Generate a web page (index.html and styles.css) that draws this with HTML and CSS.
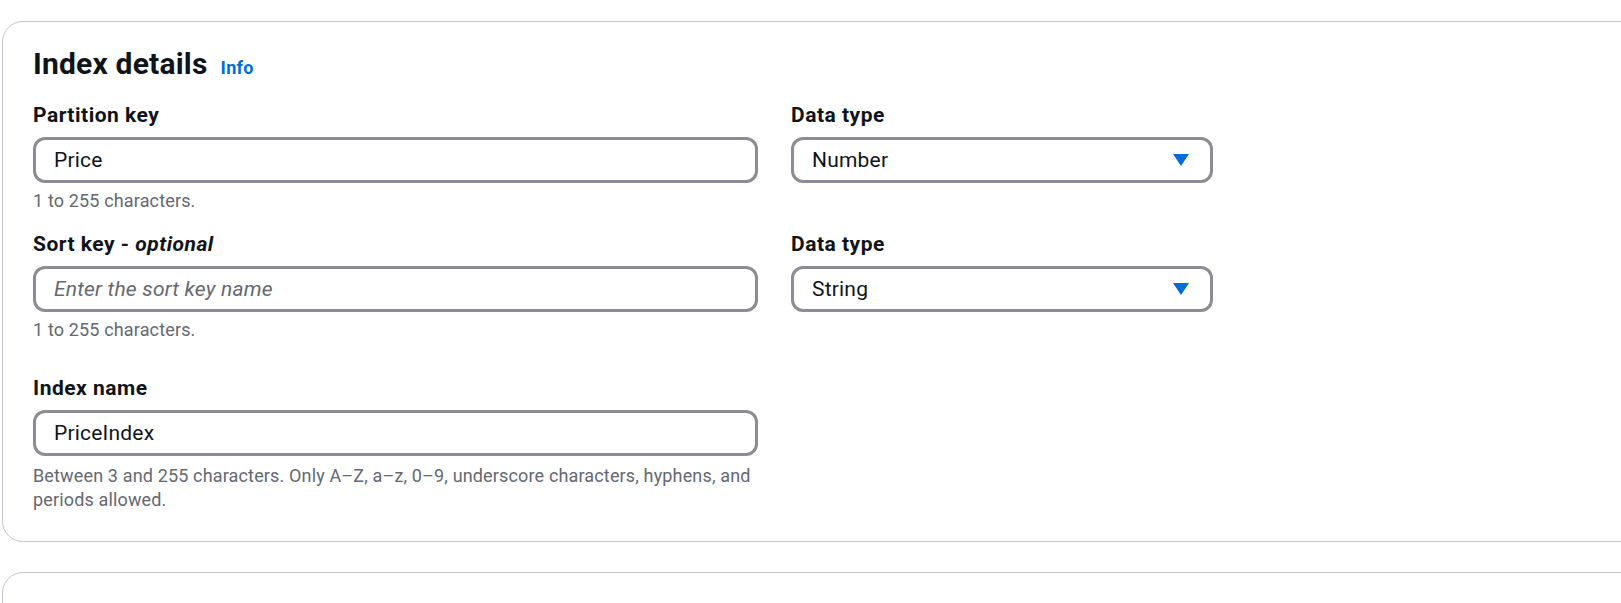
FILE: index.html
```html
<!DOCTYPE html>
<html lang="en">
<head>
<meta charset="utf-8">
<title>Index details</title>
<link rel="stylesheet" href="styles.css">
</head>
<body>
<div class="page">
  <section class="card">
    <header class="card-header">
      <h2 class="card-title">Index details</h2>
      <a class="info-link" href="#">Info</a>
    </header>

    <div class="form-row">
      <div class="field">
        <label class="field-label" for="pk">Partition key</label>
        <input class="text-input" id="pk" type="text" value="Price">
        <div class="constraint">1 to 255 characters.</div>
      </div>
      <div class="field">
        <div class="field-label">Data type</div>
        <div class="select">
          <span class="select-value">Number</span>
          <svg class="caret" width="16" height="12" viewBox="0 0 16 12" aria-hidden="true"><polygon points="0,0 16,0 8,12" fill="#006ce0"/></svg>
        </div>
      </div>
    </div>

    <div class="form-row row-second">
      <div class="field">
        <label class="field-label" for="sk">Sort key - <i>optional</i></label>
        <input class="text-input" id="sk" type="text" placeholder="Enter the sort key name">
        <div class="constraint">1 to 255 characters.</div>
      </div>
      <div class="field">
        <div class="field-label">Data type</div>
        <div class="select">
          <span class="select-value">String</span>
          <svg class="caret" width="16" height="12" viewBox="0 0 16 12" aria-hidden="true"><polygon points="0,0 16,0 8,12" fill="#006ce0"/></svg>
        </div>
      </div>
    </div>

    <div class="form-row row-third">
      <div class="field">
        <label class="field-label" for="in">Index name</label>
        <input class="text-input" id="in" type="text" value="PriceIndex">
        <div class="constraint constraint-wide">Between 3 and 255 characters. Only A–Z, a–z, 0–9, underscore characters, hyphens, and periods allowed.</div>
      </div>
    </div>
  </section>

  <section class="card card-next"></section>
</div>
</body>
</html>
```

FILE: styles.css
```css
html, body {
  margin: 0;
  padding: 0;
  background: #ffffff;
  overflow: hidden;
  height: 100%;
}

body {
  font-family: Roboto, "Noto Sans", "Liberation Sans", sans-serif;
  color: #0f141a;
}

.page {
  padding: 21px 0 0 2px;
  width: 1700px;
}

.card {
  border: 1px solid #c6c6cd;
  border-radius: 21px;
  padding: 24px 30px 29px 30px;
  background: #ffffff;
}

.card-next {
  margin-top: 30px;
  height: 80px;
  padding: 0;
}

.card-header {
  display: flex;
  align-items: baseline;
  gap: 13px;
  height: 36px;
}

.card-title {
  margin: 0;
  font-size: 30px;
  line-height: 36px;
  font-weight: 700;
  letter-spacing: 0.2px;
  color: #0f141a;
}

.info-link {
  font-size: 18px;
  line-height: 24px;
  font-weight: 700;
  letter-spacing: 0.3px;
  color: #006ce0;
  text-decoration: none;
}

.form-row {
  display: grid;
  grid-template-columns: 725px 422px;
  column-gap: 33px;
  margin-top: 18px;
}

.row-second {
  margin-top: 16px;
}

.row-third {
  margin-top: 31px;
}

.field {
  display: flex;
  flex-direction: column;
}

.field-label {
  font-size: 21px;
  line-height: 30px;
  font-weight: 700;
  letter-spacing: 0.5px;
  color: #0f141a;
  margin-bottom: 7px;
}

.field-label i {
  font-style: italic;
}

.text-input {
  box-sizing: border-box;
  height: 46px;
  width: 100%;
  margin: 0;
  border: 3px solid #8c8c94;
  border-radius: 12px;
  padding: 0 18px;
  font-family: inherit;
  font-size: 21px;
  line-height: 40px;
  letter-spacing: 0.2px;
  color: #0f141a;
  background: #ffffff;
  outline: none;
}

.text-input::placeholder {
  color: #656871;
  font-style: italic;
  opacity: 1;
}

.select {
  box-sizing: border-box;
  height: 46px;
  border: 3px solid #8c8c94;
  border-radius: 12px;
  padding: 0 21px 0 18px;
  display: flex;
  align-items: center;
  justify-content: space-between;
  background: #ffffff;
}

.select-value {
  font-size: 21px;
  line-height: 40px;
  letter-spacing: 0.2px;
  color: #0f141a;
}

.caret {
  display: block;
}

.constraint {
  margin-top: 6px;
  font-size: 18px;
  line-height: 24px;
  letter-spacing: 0.15px;
  color: #656871;
}

.constraint-wide {
  margin-top: 8px;
}
```
